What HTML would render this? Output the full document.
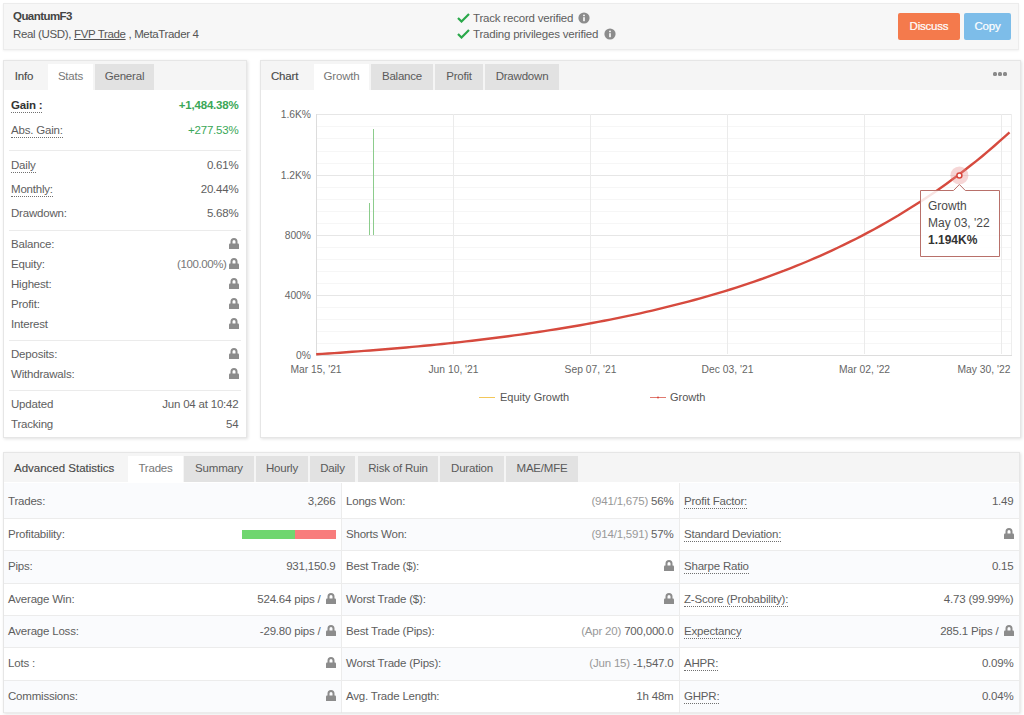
<!DOCTYPE html>
<html><head><meta charset="utf-8">
<style>
*{box-sizing:border-box;margin:0;padding:0}
html,body{width:1024px;height:715px;overflow:hidden;background:#fff;font-family:"Liberation Sans",sans-serif;color:#5e5e5e;font-size:11.5px;letter-spacing:-.2px}
.panel{position:absolute;background:#fff;border:1px solid #e6e6e6;box-shadow:1px 1px 3px rgba(0,0,0,.12)}
#hdr{left:3px;top:3px;width:1016px;height:47px;background:#f7f7f7;border-color:#ececec;box-shadow:0 1px 2px rgba(0,0,0,.06)}
.t{position:absolute;white-space:nowrap;line-height:14px}
.btn{position:absolute;color:#fff;text-align:center;border-radius:2px;font-size:11.5px;line-height:27px;height:27px;-webkit-text-stroke:.2px #fff}
.tabbar{position:absolute;left:0;top:0;right:0;height:29px;background:#f5f5f5}
.tab{position:absolute;top:3px;height:26px;line-height:25px;text-align:center;color:#5a5a5a;font-size:11.5px}
.tab.g{background:#e2e2e2}
.tab.a{background:#fff;color:#777}
.sep{position:absolute;left:5px;right:5px;height:1px;background:#ebebeb}
.lbl{position:absolute;left:7px;white-space:nowrap;line-height:14px;color:#5e5e5e}
.val{position:absolute;right:7.5px;white-space:nowrap;line-height:14px;text-align:right;color:#5e5e5e}
.dot{border-bottom:1px dotted #707070;padding-bottom:1px}
.lock{display:inline-block;vertical-align:-1px;margin-left:2px}
.col{position:absolute;top:0;height:259px;border-right:1px solid #ececec}
.row{position:absolute;left:0;right:0;border-bottom:1px solid #ececec}
.rl{position:absolute;left:4px;top:15px;margin-top:-7px;line-height:14px;white-space:nowrap}
.rv{position:absolute;right:5.5px;top:15px;margin-top:-7px;line-height:14px;white-space:nowrap;text-align:right}
.lt{color:#999}
.pbar{display:inline-block;height:9px;vertical-align:middle}
.pbar span{display:inline-block;height:9px;vertical-align:top}
svg text{font-family:"Liberation Sans",sans-serif;letter-spacing:0}
</style></head><body>

<div class="panel" id="hdr">
  <div class="t" style="left:9px;top:5px;font-weight:bold;color:#444;letter-spacing:-.55px">QuantumF3</div>
  <div class="t" style="left:9px;top:23px;color:#555;letter-spacing:-.35px">Real (USD), <span style="text-decoration:underline">FVP Trade</span> , MetaTrader 4</div>
  <svg style="position:absolute;left:453px;top:9px" width="13" height="10" viewBox="0 0 13 10"><path d="M1 5l3.5 3.5L12 1" fill="none" stroke="#2aa84a" stroke-width="2.2"/></svg>
  <svg style="position:absolute;left:453px;top:25px" width="13" height="10" viewBox="0 0 13 10"><path d="M1 5l3.5 3.5L12 1" fill="none" stroke="#2aa84a" stroke-width="2.2"/></svg>
  <div class="t" style="left:469px;top:7px">Track record verified</div>
  <div class="t" style="left:469px;top:23px">Trading privileges verified</div>
  <svg style="position:absolute;left:574px;top:8px" width="12" height="12" viewBox="0 0 12 12"><circle cx="6" cy="6" r="5.6" fill="#8c8c8c"/><rect x="5.2" y="5.2" width="1.6" height="4" fill="#fff"/><circle cx="6" cy="3.4" r="0.9" fill="#fff"/></svg>
  <svg style="position:absolute;left:600px;top:24px" width="12" height="12" viewBox="0 0 12 12"><circle cx="6" cy="6" r="5.6" fill="#8c8c8c"/><rect x="5.2" y="5.2" width="1.6" height="4" fill="#fff"/><circle cx="6" cy="3.4" r="0.9" fill="#fff"/></svg>
  <div class="btn" style="left:894px;top:9px;width:62px;background:#f47a4c">Discuss</div>
  <div class="btn" style="left:960px;top:9px;width:47px;background:#7dbde9">Copy</div>
</div>

<div class="panel" style="left:3px;top:60px;width:244px;height:378px">
  <div class="tabbar">
    <div class="tab" style="left:0;width:40px;color:#4a4a4a;-webkit-text-stroke:.15px #4a4a4a">Info</div>
    <div class="tab a" style="left:44px;width:45px">Stats</div>
    <div class="tab g" style="left:91px;width:59px">General</div>
  </div>
  <div class="lbl" style="top:37px;font-weight:bold;color:#333;"><span class="dot">Gain :</span></div><div class="val" style="top:37px;color:#3aa757;font-weight:bold;">+1,484.38%</div><div class="lbl" style="top:62px;"><span class="dot">Abs. Gain:</span></div><div class="val" style="top:62px;color:#3aa757;">+277.53%</div><div class="sep" style="top:89px"></div><div class="lbl" style="top:97px;"><span class="dot">Daily</span></div><div class="val" style="top:97px;">0.61%</div><div class="lbl" style="top:121px;"><span class="dot">Monthly:</span></div><div class="val" style="top:121px;">20.44%</div><div class="lbl" style="top:145px;">Drawdown:</div><div class="val" style="top:145px;">5.68%</div><div class="sep" style="top:169px"></div><div class="lbl" style="top:176px;">Balance:</div><div class="val" style="top:176px;"><svg class="lock" viewBox="0 0 10 11.5" width="10" height="11.5"><path d="M2.5 6.5V3.5a2.5 2.5 0 0 1 5 0V6.5" fill="none" stroke="#8c8c8c" stroke-width="2"/><rect x="0" y="5.5" width="10" height="6" rx="1" fill="#8c8c8c"/></svg></div><div class="lbl" style="top:196px;">Equity:</div><div class="val" style="top:196px;"><span style="color:#777;letter-spacing:-.4px">(100.00%)</span><svg class="lock" viewBox="0 0 10 11.5" width="10" height="11.5"><path d="M2.5 6.5V3.5a2.5 2.5 0 0 1 5 0V6.5" fill="none" stroke="#8c8c8c" stroke-width="2"/><rect x="0" y="5.5" width="10" height="6" rx="1" fill="#8c8c8c"/></svg></div><div class="lbl" style="top:216px;">Highest:</div><div class="val" style="top:216px;"><svg class="lock" viewBox="0 0 10 11.5" width="10" height="11.5"><path d="M2.5 6.5V3.5a2.5 2.5 0 0 1 5 0V6.5" fill="none" stroke="#8c8c8c" stroke-width="2"/><rect x="0" y="5.5" width="10" height="6" rx="1" fill="#8c8c8c"/></svg></div><div class="lbl" style="top:236px;">Profit:</div><div class="val" style="top:236px;"><svg class="lock" viewBox="0 0 10 11.5" width="10" height="11.5"><path d="M2.5 6.5V3.5a2.5 2.5 0 0 1 5 0V6.5" fill="none" stroke="#8c8c8c" stroke-width="2"/><rect x="0" y="5.5" width="10" height="6" rx="1" fill="#8c8c8c"/></svg></div><div class="lbl" style="top:256px;">Interest</div><div class="val" style="top:256px;"><svg class="lock" viewBox="0 0 10 11.5" width="10" height="11.5"><path d="M2.5 6.5V3.5a2.5 2.5 0 0 1 5 0V6.5" fill="none" stroke="#8c8c8c" stroke-width="2"/><rect x="0" y="5.5" width="10" height="6" rx="1" fill="#8c8c8c"/></svg></div><div class="sep" style="top:279px"></div><div class="lbl" style="top:286px;">Deposits:</div><div class="val" style="top:286px;"><svg class="lock" viewBox="0 0 10 11.5" width="10" height="11.5"><path d="M2.5 6.5V3.5a2.5 2.5 0 0 1 5 0V6.5" fill="none" stroke="#8c8c8c" stroke-width="2"/><rect x="0" y="5.5" width="10" height="6" rx="1" fill="#8c8c8c"/></svg></div><div class="lbl" style="top:306px;">Withdrawals:</div><div class="val" style="top:306px;"><svg class="lock" viewBox="0 0 10 11.5" width="10" height="11.5"><path d="M2.5 6.5V3.5a2.5 2.5 0 0 1 5 0V6.5" fill="none" stroke="#8c8c8c" stroke-width="2"/><rect x="0" y="5.5" width="10" height="6" rx="1" fill="#8c8c8c"/></svg></div><div class="sep" style="top:329px"></div><div class="lbl" style="top:336px;">Updated</div><div class="val" style="top:336px;">Jun 04 at 10:42</div><div class="lbl" style="top:356px;">Tracking</div><div class="val" style="top:356px;">54</div>
</div>

<div class="panel" style="left:260px;top:60px;width:761px;height:378px">
  <div class="tabbar">
    <div class="tab" style="left:0;width:52px;color:#4a4a4a;text-align:left;padding-left:10px;-webkit-text-stroke:.15px #4a4a4a">Chart</div>
    <div class="tab a" style="left:53px;width:55px">Growth</div>
    <div class="tab g" style="left:110px;width:62px">Balance</div>
    <div class="tab g" style="left:174px;width:48px">Profit</div>
    <div class="tab g" style="left:224px;width:74px">Drawdown</div>
    <div style="position:absolute;left:732px;top:11px;width:4px;height:4px;border-radius:1.5px;background:#8a8a8a"></div><div style="position:absolute;left:737px;top:11px;width:4px;height:4px;border-radius:1.5px;background:#8a8a8a"></div><div style="position:absolute;left:742px;top:11px;width:4px;height:4px;border-radius:1.5px;background:#8a8a8a"></div>
  </div>
</div>

<svg style="position:absolute;left:0;top:0" width="1024" height="715" viewBox="0 0 1024 715">
  <line x1="316" x2="1011" y1="126.5" y2="126.5" stroke="#f6f6f6" stroke-width="1"/><line x1="316" x2="1011" y1="138.5" y2="138.5" stroke="#f6f6f6" stroke-width="1"/><line x1="316" x2="1011" y1="151.5" y2="151.5" stroke="#f6f6f6" stroke-width="1"/><line x1="316" x2="1011" y1="163.5" y2="163.5" stroke="#f6f6f6" stroke-width="1"/><line x1="316" x2="1011" y1="187.5" y2="187.5" stroke="#f6f6f6" stroke-width="1"/><line x1="316" x2="1011" y1="199.5" y2="199.5" stroke="#f6f6f6" stroke-width="1"/><line x1="316" x2="1011" y1="211.5" y2="211.5" stroke="#f6f6f6" stroke-width="1"/><line x1="316" x2="1011" y1="223.5" y2="223.5" stroke="#f6f6f6" stroke-width="1"/><line x1="316" x2="1011" y1="247.5" y2="247.5" stroke="#f6f6f6" stroke-width="1"/><line x1="316" x2="1011" y1="259.5" y2="259.5" stroke="#f6f6f6" stroke-width="1"/><line x1="316" x2="1011" y1="271.5" y2="271.5" stroke="#f6f6f6" stroke-width="1"/><line x1="316" x2="1011" y1="283.5" y2="283.5" stroke="#f6f6f6" stroke-width="1"/><line x1="316" x2="1011" y1="307.5" y2="307.5" stroke="#f6f6f6" stroke-width="1"/><line x1="316" x2="1011" y1="319.5" y2="319.5" stroke="#f6f6f6" stroke-width="1"/><line x1="316" x2="1011" y1="331.5" y2="331.5" stroke="#f6f6f6" stroke-width="1"/><line x1="316" x2="1011" y1="343.5" y2="343.5" stroke="#f6f6f6" stroke-width="1"/><line x1="316" x2="1011" y1="114.5" y2="114.5" stroke="#e6e6e6" stroke-width="1"/><line x1="316" x2="1011" y1="175.5" y2="175.5" stroke="#e6e6e6" stroke-width="1"/><line x1="316" x2="1011" y1="235.5" y2="235.5" stroke="#e6e6e6" stroke-width="1"/><line x1="316" x2="1011" y1="295.5" y2="295.5" stroke="#e6e6e6" stroke-width="1"/><line x1="453.5" x2="453.5" y1="114" y2="354" stroke="#ebebeb" stroke-width="1"/><line x1="590.5" x2="590.5" y1="114" y2="354" stroke="#ebebeb" stroke-width="1"/><line x1="727.5" x2="727.5" y1="114" y2="354" stroke="#ebebeb" stroke-width="1"/><line x1="864.5" x2="864.5" y1="114" y2="354" stroke="#ebebeb" stroke-width="1"/><line x1="1001.5" x2="1001.5" y1="114" y2="354" stroke="#ebebeb" stroke-width="1"/><line x1="316.5" x2="316.5" y1="114" y2="355" stroke="#dcdcdc" stroke-width="1"/><line x1="1011.5" x2="1011.5" y1="114" y2="355" stroke="#eeeeee" stroke-width="1"/><line x1="316" x2="1012" y1="355.5" y2="355.5" stroke="#dddddd" stroke-width="1"/>
  <g font-size="10.3" fill="#666"><text x="311" y="118.0" text-anchor="end">1.6K%</text><text x="311" y="179.0" text-anchor="end">1.2K%</text><text x="311" y="239.0" text-anchor="end">800%</text><text x="311" y="299.0" text-anchor="end">400%</text><text x="311" y="359.0" text-anchor="end">0%</text><text x="316" y="373" text-anchor="middle">Mar 15, '21</text><text x="453.5" y="373" text-anchor="middle">Jun 10, '21</text><text x="590.5" y="373" text-anchor="middle">Sep 07, '21</text><text x="727.5" y="373" text-anchor="middle">Dec 03, '21</text><text x="864.5" y="373" text-anchor="middle">Mar 02, '22</text><text x="984" y="373" text-anchor="middle">May 30, '22</text></g>
  <line x1="369.5" x2="369.5" y1="203" y2="235" stroke="#8ccc8c" stroke-width="1"/>
  <line x1="373.5" x2="373.5" y1="129" y2="235" stroke="#8ccc8c" stroke-width="1"/>
  <polyline points="316.2,354.3 322.2,353.9 328.2,353.5 334.2,353.1 340.2,352.7 346.2,352.3 352.2,351.8 358.2,351.4 364.2,350.9 370.2,350.5 376.2,350.0 382.2,349.5 388.2,349.0 394.2,348.5 400.2,348.0 406.2,347.5 412.2,346.9 418.2,346.4 424.2,345.8 430.2,345.2 436.2,344.6 442.2,344.0 448.2,343.4 454.2,342.7 460.2,342.1 466.2,341.4 472.2,340.7 478.2,340.0 484.2,339.3 490.2,338.5 496.2,337.8 502.2,337.0 508.2,336.2 514.2,335.4 520.2,334.6 526.2,333.7 532.2,332.9 538.2,332.0 544.2,331.1 550.2,330.1 556.2,329.2 562.2,328.2 568.2,327.2 574.2,326.2 580.2,325.2 586.2,324.1 592.2,323.0 598.2,321.9 604.2,320.7 610.2,319.6 616.2,318.4 622.2,317.1 628.2,315.9 634.2,314.6 640.2,313.3 646.2,311.9 652.2,310.6 658.2,309.2 664.2,307.7 670.2,306.2 676.2,304.7 682.2,303.2 688.2,301.6 694.2,300.0 700.2,298.3 706.2,296.6 712.2,294.9 718.2,293.1 724.2,291.3 730.2,289.5 736.2,287.6 742.2,285.6 748.2,283.6 754.2,281.6 760.2,279.5 766.2,277.4 772.2,275.2 778.2,272.9 784.2,270.7 790.2,268.3 796.2,265.9 802.2,263.5 808.2,261.0 814.2,258.4 820.2,255.8 826.2,253.1 832.2,250.3 838.2,247.5 844.2,244.6 850.2,241.7 856.2,238.7 862.2,235.6 868.2,232.4 874.2,229.2 880.2,225.9 886.2,222.5 892.2,219.0 898.2,215.5 904.2,211.8 910.2,208.1 916.2,204.3 922.2,200.4 928.2,196.4 934.2,192.4 940.2,188.2 946.2,183.9 952.2,179.6 958.2,175.1 964.2,170.5 970.2,165.8 976.2,161.1 982.2,156.2 988.2,151.1 994.2,146.0 1000.2,140.7 1006.2,135.4 1009.5,132.4" fill="none" stroke="#d64a3e" stroke-width="2.4" stroke-linejoin="round"/>
  <circle cx="959.4" cy="175.4" r="9" fill="#e58a8a" fill-opacity="0.35"/>
  <circle cx="959.4" cy="175.4" r="2.5" fill="#fff" stroke="#d8463c" stroke-width="1.5"/>
  <line x1="479" x2="495" y1="397.5" y2="397.5" stroke="#f3c75a" stroke-width="1"/>
  <text x="500" y="401" font-size="11" fill="#555">Equity Growth</text>
  <line x1="650" x2="666" y1="397.5" y2="397.5" stroke="#e07a70" stroke-width="1"/>
  <circle cx="658" cy="397.5" r="1" fill="#d8463c"/>
  <text x="670" y="401" font-size="11" fill="#555">Growth</text>
  <path d="M920.5 190.5H953.5L959.4 184.5L965.3 190.5H999.5V256.5H920.5Z" fill="#fff" fill-opacity="0.85" stroke="#b8706a" stroke-width="1"/>
  <g font-size="12" fill="#4a4a4a"><text x="928" y="210">Growth</text><text x="928" y="227">May 03, '22</text><text x="928" y="244" font-weight="bold" fill="#333">1.194K%</text></g>
</svg>

<div class="panel" style="left:3px;top:452px;width:1017px;height:261px">
  <div class="tabbar">
    <div class="tab" style="left:0;width:124px;color:#4a4a4a;text-align:left;padding-left:10px;letter-spacing:0;-webkit-text-stroke:.15px #4a4a4a">Advanced Statistics</div>
    <div class="tab a" style="left:124px;width:55px">Trades</div>
    <div class="tab g" style="left:180px;width:70px">Summary</div>
    <div class="tab g" style="left:252px;width:52px">Hourly</div>
    <div class="tab g" style="left:306px;width:45px">Daily</div>
    <div class="tab g" style="left:354px;width:80px">Risk of Ruin</div>
    <div class="tab g" style="left:436px;width:64px">Duration</div>
    <div class="tab g" style="left:502px;width:72px">MAE/MFE</div>
  </div>
  <div class="col" style="left:0px;width:338px;top:30px;height:229px"><div class="row" style="top:0px;height:36px;background:#fafbfd"><div class="rl" style="top:18px">Trades:</div><div class="rv" style="top:18px">3,266</div></div><div class="row" style="top:36px;height:32px;background:#fff"><div class="rl">Profitability:</div><div class="rv"><span class="pbar"><span style="width:53px;background:#6fd66f"></span><span style="width:41px;background:#f87c7c"></span></span></div></div><div class="row" style="top:68px;height:33px;background:#fafbfd"><div class="rl">Pips:</div><div class="rv">931,150.9</div></div><div class="row" style="top:101px;height:32px;background:#fff"><div class="rl">Average Win:</div><div class="rv">524.64 pips / <svg class="lock" viewBox="0 0 10 11.5" width="10" height="11.5"><path d="M2.5 6.5V3.5a2.5 2.5 0 0 1 5 0V6.5" fill="none" stroke="#8c8c8c" stroke-width="2"/><rect x="0" y="5.5" width="10" height="6" rx="1" fill="#8c8c8c"/></svg></div></div><div class="row" style="top:133px;height:32px;background:#fafbfd"><div class="rl">Average Loss:</div><div class="rv">-29.80 pips / <svg class="lock" viewBox="0 0 10 11.5" width="10" height="11.5"><path d="M2.5 6.5V3.5a2.5 2.5 0 0 1 5 0V6.5" fill="none" stroke="#8c8c8c" stroke-width="2"/><rect x="0" y="5.5" width="10" height="6" rx="1" fill="#8c8c8c"/></svg></div></div><div class="row" style="top:165px;height:33px;background:#fff"><div class="rl">Lots :</div><div class="rv"><svg class="lock" viewBox="0 0 10 11.5" width="10" height="11.5"><path d="M2.5 6.5V3.5a2.5 2.5 0 0 1 5 0V6.5" fill="none" stroke="#8c8c8c" stroke-width="2"/><rect x="0" y="5.5" width="10" height="6" rx="1" fill="#8c8c8c"/></svg></div></div><div class="row" style="top:198px;height:32px;background:#fafbfd"><div class="rl">Commissions:</div><div class="rv"><svg class="lock" viewBox="0 0 10 11.5" width="10" height="11.5"><path d="M2.5 6.5V3.5a2.5 2.5 0 0 1 5 0V6.5" fill="none" stroke="#8c8c8c" stroke-width="2"/><rect x="0" y="5.5" width="10" height="6" rx="1" fill="#8c8c8c"/></svg></div></div></div><div class="col" style="left:338px;width:338px;top:30px;height:229px"><div class="row" style="top:0px;height:36px;background:#fff"><div class="rl" style="top:18px">Longs Won:</div><div class="rv" style="top:18px"><span class="lt">(941/1,675)</span> 56%</div></div><div class="row" style="top:36px;height:32px;background:#fafbfd"><div class="rl">Shorts Won:</div><div class="rv"><span class="lt">(914/1,591)</span> 57%</div></div><div class="row" style="top:68px;height:33px;background:#fff"><div class="rl">Best Trade ($):</div><div class="rv"><svg class="lock" viewBox="0 0 10 11.5" width="10" height="11.5"><path d="M2.5 6.5V3.5a2.5 2.5 0 0 1 5 0V6.5" fill="none" stroke="#8c8c8c" stroke-width="2"/><rect x="0" y="5.5" width="10" height="6" rx="1" fill="#8c8c8c"/></svg></div></div><div class="row" style="top:101px;height:32px;background:#fafbfd"><div class="rl">Worst Trade ($):</div><div class="rv"><svg class="lock" viewBox="0 0 10 11.5" width="10" height="11.5"><path d="M2.5 6.5V3.5a2.5 2.5 0 0 1 5 0V6.5" fill="none" stroke="#8c8c8c" stroke-width="2"/><rect x="0" y="5.5" width="10" height="6" rx="1" fill="#8c8c8c"/></svg></div></div><div class="row" style="top:133px;height:32px;background:#fff"><div class="rl">Best Trade (Pips):</div><div class="rv"><span class="lt">(Apr 20)</span> 700,000.0</div></div><div class="row" style="top:165px;height:33px;background:#fafbfd"><div class="rl">Worst Trade (Pips):</div><div class="rv"><span class="lt">(Jun 15)</span> -1,547.0</div></div><div class="row" style="top:198px;height:32px;background:#fff"><div class="rl">Avg. Trade Length:</div><div class="rv">1h 48m</div></div></div><div class="col" style="left:676px;width:340px;top:30px;height:229px"><div class="row" style="top:0px;height:36px;background:#fafbfd"><div class="rl" style="top:18px"><span class="dot">Profit Factor:</span></div><div class="rv" style="top:18px">1.49</div></div><div class="row" style="top:36px;height:32px;background:#fff"><div class="rl"><span class="dot">Standard Deviation:</span></div><div class="rv"><svg class="lock" viewBox="0 0 10 11.5" width="10" height="11.5"><path d="M2.5 6.5V3.5a2.5 2.5 0 0 1 5 0V6.5" fill="none" stroke="#8c8c8c" stroke-width="2"/><rect x="0" y="5.5" width="10" height="6" rx="1" fill="#8c8c8c"/></svg></div></div><div class="row" style="top:68px;height:33px;background:#fafbfd"><div class="rl"><span class="dot">Sharpe Ratio</span></div><div class="rv">0.15</div></div><div class="row" style="top:101px;height:32px;background:#fff"><div class="rl"><span class="dot">Z-Score (Probability):</span></div><div class="rv">4.73 (99.99%)</div></div><div class="row" style="top:133px;height:32px;background:#fafbfd"><div class="rl"><span class="dot">Expectancy</span></div><div class="rv">285.1 Pips / <svg class="lock" viewBox="0 0 10 11.5" width="10" height="11.5"><path d="M2.5 6.5V3.5a2.5 2.5 0 0 1 5 0V6.5" fill="none" stroke="#8c8c8c" stroke-width="2"/><rect x="0" y="5.5" width="10" height="6" rx="1" fill="#8c8c8c"/></svg></div></div><div class="row" style="top:165px;height:33px;background:#fff"><div class="rl"><span class="dot">AHPR:</span></div><div class="rv">0.09%</div></div><div class="row" style="top:198px;height:32px;background:#fafbfd"><div class="rl"><span class="dot">GHPR:</span></div><div class="rv">0.04%</div></div></div>
</div>

</body></html>
